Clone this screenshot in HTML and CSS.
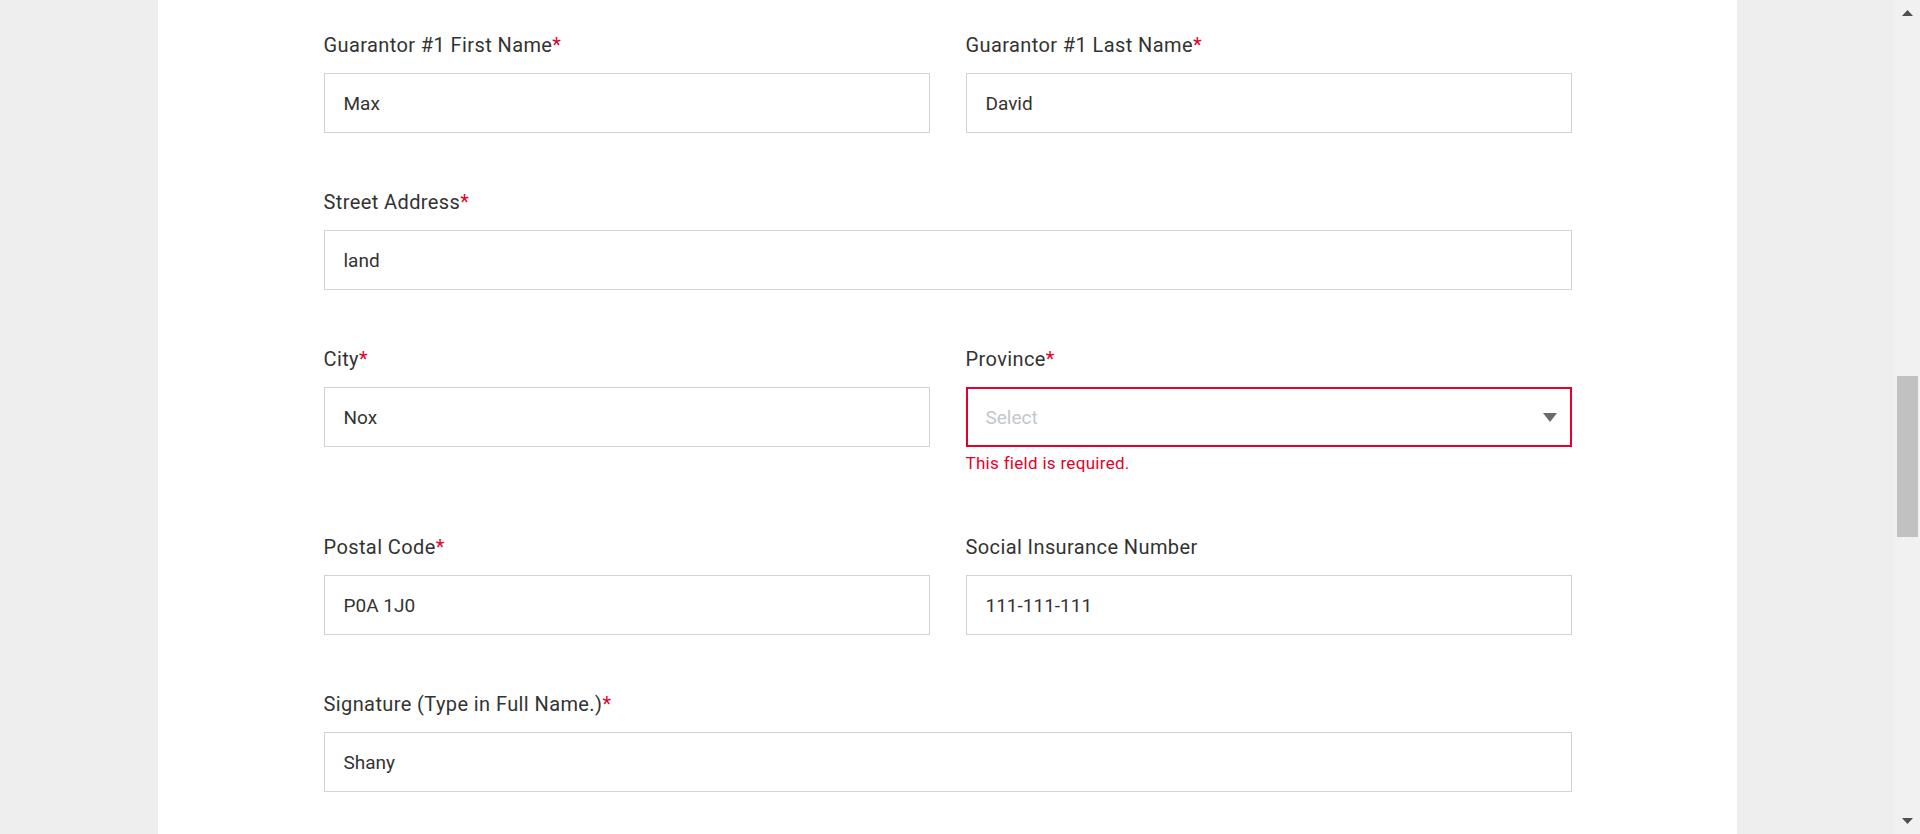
FILE: index.html
```html
<!DOCTYPE html>
<html lang="en">
<head>
<meta charset="utf-8">
<title>Guarantor Form</title>
<link rel="stylesheet" href="styles.css">
</head>
<body>
<div class="viewport">
  <main class="page">
    <div class="panel">
      <form class="form">
        <div class="row two">
          <div class="field">
            <label class="label">Guarantor #1 First Name<span class="req">*</span></label>
            <input class="input" type="text" value="Max">
          </div>
          <div class="field">
            <label class="label">Guarantor #1 Last Name<span class="req">*</span></label>
            <input class="input" type="text" value="David">
          </div>
        </div>
        <div class="row">
          <div class="field">
            <label class="label">Street Address<span class="req">*</span></label>
            <input class="input" type="text" value="land">
          </div>
        </div>
        <div class="row two">
          <div class="field">
            <label class="label">City<span class="req">*</span></label>
            <input class="input" type="text" value="Nox">
          </div>
          <div class="field">
            <label class="label">Province<span class="req">*</span></label>
            <div class="select invalid">
              <span class="placeholder">Select</span>
              <svg class="caret" width="14" height="9" viewBox="0 0 14 9"><path d="M0 0H14L7 9Z" fill="#6b6b6b"/></svg>
            </div>
            <div class="error">This field is required.</div>
          </div>
        </div>
        <div class="row two">
          <div class="field">
            <label class="label">Postal Code<span class="req">*</span></label>
            <input class="input" type="text" value="P0A 1J0">
          </div>
          <div class="field">
            <label class="label">Social Insurance Number</label>
            <input class="input" type="text" value="111-111-111">
          </div>
        </div>
        <div class="row">
          <div class="field">
            <label class="label">Signature (Type in Full Name.)<span class="req">*</span></label>
            <input class="input" type="text" value="Shany">
          </div>
        </div>
      </form>
    </div>
  </main>
  <div class="scrollbar">
    <div class="sb-btn">
      <svg width="11" height="6" viewBox="0 0 11 6"><path d="M5.5 0L11 6H0Z" fill="#505050"/></svg>
    </div>
    <div class="sb-track">
      <div class="sb-thumb"></div>
    </div>
    <div class="sb-btn">
      <svg width="11" height="6" viewBox="0 0 11 6"><path d="M0 0H11L5.5 6Z" fill="#505050"/></svg>
    </div>
  </div>
</div>
</body>
</html>
```
FILE: styles.css
```css
html, body {
  margin: 0;
  padding: 0;
  height: 100%;
  overflow: hidden;
}
body {
  background: #eeeeee;
  font-family: Roboto, "Liberation Sans", Arial, sans-serif;
  color: #333333;
}
.viewport {
  display: flex;
  height: 834px;
}
.page {
  flex: 1;
  display: flex;
  justify-content: center;
  overflow: hidden;
}
.panel {
  width: 1579px;
  background: #ffffff;
  display: flex;
  justify-content: center;
  padding-top: 33px;
  box-sizing: border-box;
}
.form {
  width: 1248px;
  display: flex;
  flex-direction: column;
  gap: 57px;
}
.row {
  display: grid;
  grid-template-columns: 1fr;
}
.row.two {
  grid-template-columns: 606px 606px;
  column-gap: 36px;
}
.field {
  display: flex;
  flex-direction: column;
}
.label {
  font-size: 20px;
  letter-spacing: 0.4px;
  line-height: 24px;
  color: #333333;
  margin-bottom: 16px;
}
.req {
  color: #e4002b;
}
.input {
  box-sizing: border-box;
  height: 60px;
  width: 100%;
  border: 1px solid #d3d3d3;
  border-radius: 0;
  padding: 0 19px;
  font-family: inherit;
  font-size: 19px;
  color: #333333;
  background: #ffffff;
  outline: none;
  margin: 0;
}
.select {
  box-sizing: border-box;
  height: 60px;
  border: 1px solid #d3d3d3;
  padding: 0 14px 0 19px;
  display: flex;
  align-items: center;
  justify-content: space-between;
  background: #ffffff;
}
.select.invalid {
  border: 2px solid #e4002b;
  padding-left: 18px;
  padding-right: 13px;
}
.placeholder {
  font-size: 19px;
  color: #c2c7cb;
}
.caret {
  display: block;
}
.error {
  color: #e4002b;
  font-size: 17px;
  letter-spacing: 0.3px;
  line-height: 29px;
  padding-top: 2px;
}
.scrollbar {
  width: 25px;
  background: #f1f1f1;
  display: flex;
  flex-direction: column;
}
.sb-btn {
  height: 26px;
  display: flex;
  align-items: center;
  justify-content: center;
}
.sb-track {
  flex: 1;
  display: flex;
  flex-direction: column;
  align-items: center;
  padding-top: 350px;
}
.sb-thumb {
  width: 21px;
  height: 161px;
  background: #c1c1c1;
}
```
